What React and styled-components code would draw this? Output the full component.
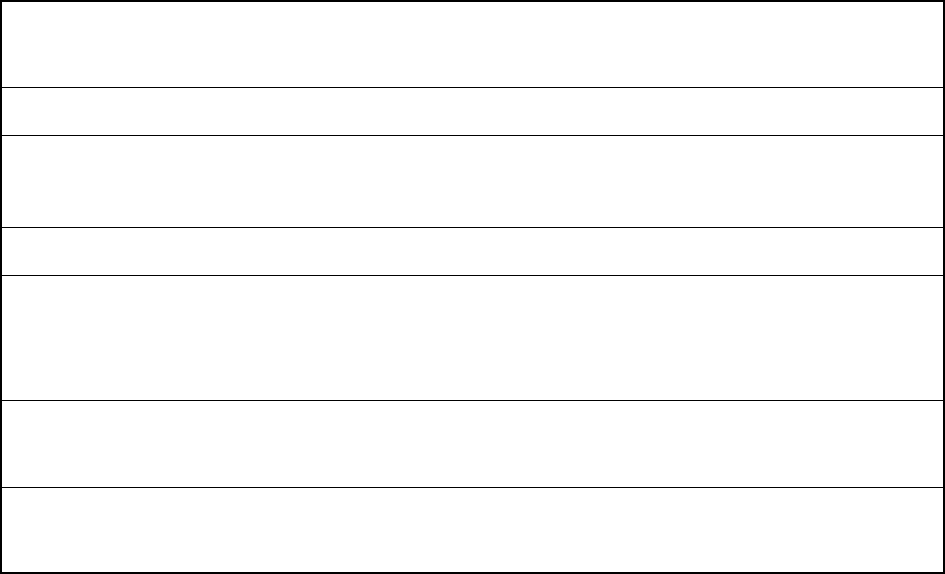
import styled, { createGlobalStyle } from "styled-components";

const GlobalStyle = createGlobalStyle`
  html, body {
    margin: 0;
    padding: 0;
    background: #fff;
    font-family: "Liberation Sans", Arial, sans-serif;
  }
`;

const Frame = styled.div`
  box-sizing: border-box;
  width: 945px;
  height: 574px;
  border: 2px solid #000;
  display: flex;
  flex-direction: column;
  background: #fff;
`;

const Row = styled.div`
  height: ${(p) => p.$h}px;
  flex: none;
  border-bottom: ${(p) => (p.$last ? "none" : "1px solid #000")};
`;

// content heights of each band, top to bottom
const rows = [85, 47, 91, 47, 124, 86, 84];

export default function App() {
    return (
        <>
            <GlobalStyle />
            <Frame>
                {rows.map((h, i) => (
                    <Row key={i} $h={h} $last={i === rows.length - 1} />
                ))}
            </Frame>
        </>
    );
}
